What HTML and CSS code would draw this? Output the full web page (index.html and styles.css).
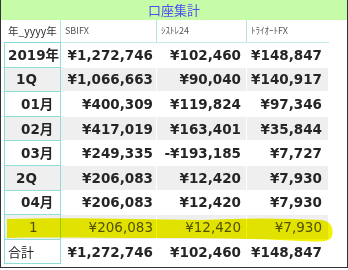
FILE: index.html
```html
<!DOCTYPE html>
<html lang="ja">

<head>
  <meta charset="UTF-8">
  <meta name="viewport" content="width=device-width, initial-scale=1.0">
  <title>口座集計</title>
  <link rel="stylesheet" href="styles.css">
</head>

<body>
  <div class="sheet">
    <div class="caption">口座集計</div>
    <table class="pivot">
      <colgroup>
        <col class="c-label">
        <col class="c-sbi">
        <col class="c-sys">
        <col class="c-tri">
      </colgroup>
      <thead>
        <tr>
          <th class="lbl">年_yyyy年</th>
          <th>SBIFX</th>
          <th>ｼｽﾄﾚ24</th>
          <th>ﾄﾗｲｵｰﾄFX</th>
        </tr>
      </thead>
      <tbody>
        <tr>
          <td class="lbl lv0">2019年</td>
          <td>¥1,272,746</td>
          <td>¥102,460</td>
          <td>¥148,847</td>
        </tr>
        <tr class="alt">
          <td class="lbl lv1">1Q</td>
          <td>¥1,066,663</td>
          <td>¥90,040</td>
          <td>¥140,917</td>
        </tr>
        <tr>
          <td class="lbl lv2">01月</td>
          <td>¥400,309</td>
          <td>¥119,824</td>
          <td>¥97,346</td>
        </tr>
        <tr class="alt">
          <td class="lbl lv2">02月</td>
          <td>¥417,019</td>
          <td>¥163,401</td>
          <td>¥35,844</td>
        </tr>
        <tr>
          <td class="lbl lv2">03月</td>
          <td>¥249,335</td>
          <td>-¥193,185</td>
          <td>¥7,727</td>
        </tr>
        <tr class="alt">
          <td class="lbl lv1">2Q</td>
          <td>¥206,083</td>
          <td>¥12,420</td>
          <td>¥7,930</td>
        </tr>
        <tr>
          <td class="lbl lv2">04月</td>
          <td>¥206,083</td>
          <td>¥12,420</td>
          <td>¥7,930</td>
        </tr>
        <tr class="alt leaf">
          <td class="lbl lv3">1</td>
          <td>¥206,083</td>
          <td>¥12,420</td>
          <td>¥7,930</td>
        </tr>
        <tr class="total">
          <td class="lbl lv0">合計</td>
          <td>¥1,272,746</td>
          <td>¥102,460</td>
          <td>¥148,847</td>
        </tr>
      </tbody>
    </table>
    <!-- 蛍光ペンの線 -->
    <svg class="marker" width="348" height="270" viewBox="0 0 348 270">
      <path d="M6 219 C60 217 140 219 200 220 C240 218 280 218 320 220 C330 221 333 228 331 236 C329 242 320 242 300 241 C250 238 200 238 150 238 C100 238 50 237 6 238 Z" />
    </svg>
  </div>
</body>

</html>
```

FILE: styles.css
```css
body {
  margin: 0;
  background: #fff;
}

.sheet {
  position: relative;
  width: 346px;
  height: 267px;
  border-left: 1px solid #333;
  border-right: 1px solid #333;
  border-bottom: 1px solid #333;
  font-family: "DejaVu Sans", "Noto Sans CJK JP", sans-serif;
  color: #252525;
  overflow: hidden;
}

.caption {
  height: 20px;
  background: #c6fba8;
  color: #4e4ef2;
  font-family: "Noto Sans CJK JP", sans-serif;
  font-size: 13px;
  line-height: 20px;
  text-align: center;
}

.pivot {
  margin-left: 3px;
  border-collapse: collapse;
  table-layout: fixed;
  width: 324px;
}

.c-label {
  width: 56px;
}

.c-sbi {
  width: 96px;
}

.c-sys {
  width: 90px;
}

.c-tri {
  width: 82px;
}

th {
  height: 17px;
  padding: 5px 0 0 4px;
  vertical-align: top;
  text-align: left;
  font-family: "Noto Sans CJK JP", sans-serif;
  font-size: 9px;
  line-height: 12px;
  font-weight: 400;
  color: #555;
  border-left: 1px solid #b5e6e4;
  border-bottom: 1px solid #c4ecea;
  white-space: nowrap;
}

th.lbl {
  font-size: 10.5px;
  color: #333;
  padding-left: 3px;
  border-left: 1px solid #fff;
  border-bottom: 1px solid #7fd8d4;
}

td {
  height: 23.6px;
  padding: 0 5px 0 0;
  text-align: right;
  font-size: 13.5px;
  line-height: 16px;
  font-weight: 700;
  border: 1px solid #fff;
  white-space: nowrap;
}

td:nth-child(2) {
  padding-right: 3px;
}

td:nth-child(4) {
  padding-right: 6px;
}

td.lbl {
  text-align: left;
  border: 1px solid #8fdcd8;
}

.lv0 {
  padding-left: 3px;
}

.lv1 {
  padding-left: 11px;
}

.lv2 {
  padding-left: 16px;
}

.lv3 {
  padding-left: 24px;
}

tbody tr.alt {
  background: #efefef;
}

tr.leaf td {
  font-weight: 400;
  color: #555;
}

tr.total td.lbl {
  font-family: "Noto Sans CJK JP", sans-serif;
  font-weight: 400;
  font-size: 13px;
}

.marker {
  position: absolute;
  left: 0;
  top: 0;
  pointer-events: none;
  mix-blend-mode: multiply;
}

.marker path {
  fill: #f2f200;
}
```
